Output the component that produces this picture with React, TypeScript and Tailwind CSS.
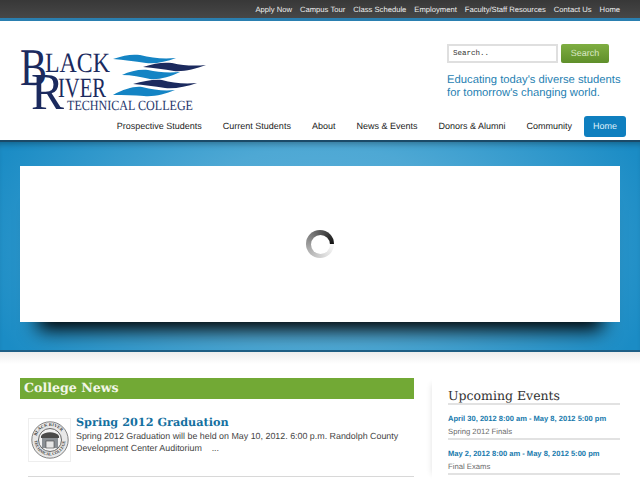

const topLinks = ["Apply Now", "Campus Tour", "Class Schedule", "Employment", "Faculty/Staff Resources", "Contact Us", "Home"];
const navLinks = ["Prospective Students", "Current Students", "About", "News & Events", "Donors & Alumni", "Community"];

function Logo() {
  return (
    <svg width="190" height="62" viewBox="0 0 190 62" className="block overflow-visible">
      <g fill="#1b2a5e" fontFamily="'Liberation Serif', serif">
        <text x="0" y="35" fontSize="53" textLength="27" lengthAdjust="spacingAndGlyphs">B</text>
        <text x="25" y="22" fontSize="28" textLength="65" lengthAdjust="spacingAndGlyphs">LACK</text>
        <text x="11" y="59" fontSize="52" textLength="33" lengthAdjust="spacingAndGlyphs">R</text>
        <text x="38" y="47" fontSize="28" textLength="48" lengthAdjust="spacingAndGlyphs">IVER</text>
        <text x="47" y="59.5" fontSize="14" fill="#27386c" textLength="126" lengthAdjust="spacingAndGlyphs">TECHNICAL COLLEGE</text>
      </g>
      <g fill="#1484c4">
        <path d="M93 9 C104 5 112 4 120 5 C132 8 142 9 156 8 C146 12 135 14 126 13 C114 11 104 10 93 9Z" />
        <path d="M102 25 C110 21 120 19 128 20 C137 22 147 23 160 22 C150 27 138 30 130 29 C120 27 112 25 102 25Z" />
        <path d="M93 45 C104 39 114 36 122 37 C134 40 144 41 155 40 C145 44 134 47 124 46 C114 45 104 45 93 45Z" />
      </g>
      <g fill="#1b2a5e">
        <path d="M123 17 C134 13 144 12 152 13 C164 16 176 16 186 15 C175 19 163 22 154 21 C144 19 134 18 123 17Z" />
        <path d="M113 34 C124 31 134 29 142 30 C152 33 164 34 177 33 C166 37 154 39 145 38 C134 36 124 35 113 34Z" />
      </g>
    </svg>
  );
}

function Seal() {
  return (
    <svg width="38" height="38" viewBox="0 0 38 38" className="block">
      <defs>
        <path id="sealTop" d="M5 19 A14 14 0 0 1 33 19" />
        <path id="sealBottom" d="M3.5 19 A15.5 15.5 0 0 0 34.5 19" />
      </defs>
      <circle cx="19" cy="19" r="18.2" fill="#e8e8e8" stroke="#666" strokeWidth="0.8" />
      <circle cx="19" cy="19" r="11.5" fill="#f2f2f2" stroke="#444" strokeWidth="0.8" />
      <text fontSize="4.4" fontWeight="700" fill="#444" fontFamily="'Liberation Serif', serif">
        <textPath href="#sealTop" startOffset="9%">BLACK RIVER</textPath>
      </text>
      <text fontSize="4.2" fontWeight="700" fill="#444" fontFamily="'Liberation Serif', serif">
        <textPath href="#sealBottom" startOffset="1%">TECHNICAL COLLEGE</textPath>
      </text>
      <path d="M10 15 C13 10 25 10 28 15 L28 17 L10 17Z" fill="#4a4a4a" />
      <rect x="11" y="17" width="16" height="10" fill="#8a8f94" />
      <rect x="15" y="20" width="8" height="7" fill="#e6e6e6" stroke="#444" strokeWidth="0.6" />
    </svg>
  );
}

function Event({ date, title }: { date: string; title: string }) {
  return (
    <div className="border-b-2 border-[#e2e2e2] h-[35px] pt-[7px]">
      <div className="text-[7.55px] leading-[13px] font-bold text-[#1679ac] whitespace-nowrap">{date}</div>
      <div className="text-[7.7px] leading-[12px] mt-[1px] text-[#6b6b6b]">{title}</div>
    </div>
  );
}

export default function App() {
  return (
    <div className="w-[640px] h-[480px] overflow-hidden bg-white font-['Liberation_Sans',Arial,sans-serif]">
      <div className="h-[21px] bg-gradient-to-b from-[#383838] to-[#474747] border-b-[3px] border-[#2a7fb0] flex justify-end gap-2 pr-5 text-[7.65px] leading-[19px] text-[#efefef] [text-rendering:geometricPrecision]">
        {topLinks.map((l) => (
          <span key={l}>{l}</span>
        ))}
      </div>

      <div className="h-[119px] bg-white flex flex-col [text-rendering:geometricPrecision]">
        <div className="h-[95px] pt-[23px] flex justify-between items-start pl-5 pr-5">
          <div className="mt-[6px]">
            <Logo />
          </div>
          <div className="w-[173px]">
            <div className="flex gap-[3px]">
              <div className="w-[111px] h-[19px] border-2 border-[#dfdfdf] bg-white px-[4px] font-['Liberation_Mono',monospace] text-[7.5px] leading-[16px] text-[#333]">
                Search..
              </div>
              <div className="w-[48px] h-[19px] rounded-[2px] bg-gradient-to-b from-[#7fae42] to-[#5f8f2a] text-[#dbe8c6] text-[9px] leading-[19px] text-center">
                Search
              </div>
            </div>
            <div className="mt-[11px] text-[11.25px] leading-[12.5px] text-[#1f7fb2] whitespace-nowrap">
              Educating today's diverse students
              <br />
              for tomorrow's changing world.
            </div>
          </div>
        </div>
        <div className="flex justify-end items-center gap-[21px] pr-[14px] h-[21px] text-[9px] text-[#222]">
          {navLinks.map((l) => (
            <span key={l}>{l}</span>
          ))}
          <span className="-ml-[9px] w-[42px] h-[21px] rounded-[3px] bg-[#0f7fbf] text-[#dff0fa] text-center leading-[21px]">
            Home
          </span>
        </div>
      </div>

      <div className="h-[212px] border-t-2 border-[#1b4a68] border-b-2 border-b-[#1f5f86] bg-[radial-gradient(ellipse_60%_120%_at_center,#5fb2dc_0%,#4ea8d4_40%,#1b8cc5_90%)] shadow-[inset_0_6px_6px_-4px_rgba(0,0,0,0.3)] px-5 pt-[24px]">
        <div className="h-[156px] bg-white shadow-[0_26px_18px_-18px_rgba(0,0,0,1)] flex items-center justify-center">
          <div className="w-[28px] h-[28px] rounded-full bg-[conic-gradient(from_90deg,#fafafa_0deg,#e0e0e0_60deg,#b0b0b0_150deg,#777_230deg,#444_300deg,#111_360deg)] flex items-center justify-center">
            <div className="w-[19px] h-[19px] rounded-full bg-white" />
          </div>
        </div>
      </div>

      <div className="h-[128px] bg-gradient-to-b from-[#ededed] via-white to-white bg-[length:100%_24px] bg-no-repeat flex pt-[26px] px-5 [text-rendering:geometricPrecision]">
        <div className="w-[394px]">
          <div className="h-[21px] bg-[#72a935] pl-1 font-['DejaVu_Serif',serif] font-bold text-[12.6px] leading-[20px] text-[#f2f6e8]">
            College News
          </div>
          <div className="ml-2 mt-[19px] h-[59px] border-b border-[#d8d8d8] flex gap-[5px]">
            <div className="w-[43px] h-[44px] border border-[#eeeeee] flex items-center justify-center">
              <Seal />
            </div>
            <div className="flex-1">
              <div className="-mt-[4px] font-['DejaVu_Serif',serif] font-bold text-[11.25px] leading-[16px] text-[#14709f]">
                Spring 2012 Graduation
              </div>
              <div className="text-[8.9px] leading-[12px] text-[#444] whitespace-nowrap">
                Spring 2012 Graduation will be held on May 10, 2012. 6:00 p.m. Randolph County
                <br />
                Development Center Auditorium &nbsp;&nbsp; ...
              </div>
            </div>
          </div>
        </div>
        <div className="ml-[18px] pl-[16px] w-[188px] shadow-[-6px_0_6px_-6px_rgba(0,0,0,0.12)]">
          <div className="h-[27px] pt-[9px] border-b-2 border-[#e2e2e2] font-['DejaVu_Serif',serif] text-[12.5px] leading-[17px] text-[#333] whitespace-nowrap">
            Upcoming Events
          </div>
          <Event date="April 30, 2012 8:00 am - May 8, 2012 5:00 pm" title="Spring 2012 Finals" />
          <Event date="May 2, 2012 8:00 am - May 8, 2012 5:00 pm" title="Final Exams" />
        </div>
      </div>
    </div>
  );
}
